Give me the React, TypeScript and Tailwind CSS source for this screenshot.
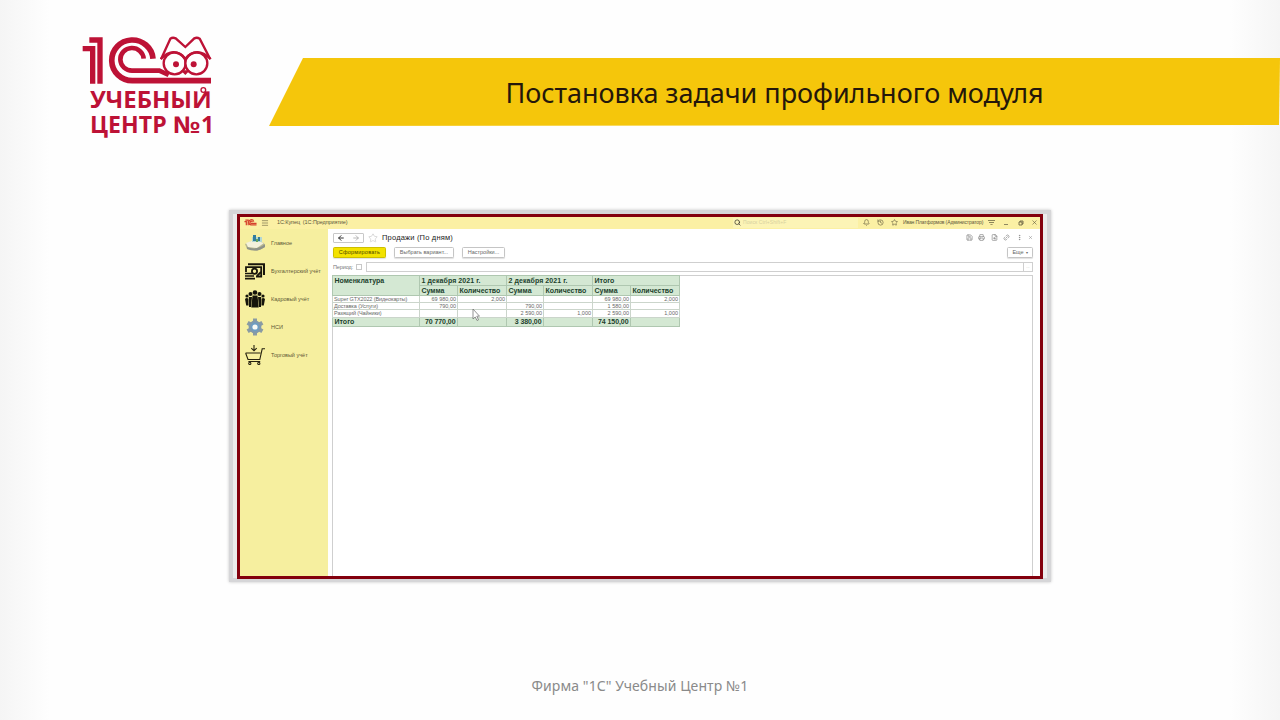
import React from "react";
import { clsx } from "clsx";
import {
  ArrowLeft,
  ArrowRight,
  Bell,
  FileSearch,
  History,
  Link2,
  Menu,
  MoreVertical,
  Printer,
  Save,
  Search,
  Star,
  X,
} from "lucide-react";

function Logo() {
  return (
    <svg className="block w-[160px] h-[120px] shrink-0" viewBox="0 0 480 360" aria-label="1С Учебный центр №1">
      <g fill="none" stroke="#bd1236">
        {/* digit one */}
        <path d="M58 45H90V176" strokeWidth="16" />
        <path d="M38 71H68V176" strokeWidth="16" />
        {/* letter С */}
        <path d="M249 101A62 61 0 1 0 187 167H423" strokeWidth="17" />
        <path d="M221 101A35 34 0 1 0 187 137H268L296 150" strokeWidth="14" />
        {/* owl with glasses */}
        <path d="M273 103L301 41Q308 36 317 40L346 66L373 40Q381 36 389 41L421 103" strokeWidth="7" />
        <circle cx="314" cy="115" r="33" fill="#fefefe" strokeWidth="7" />
        <circle cx="379" cy="115" r="33" fill="#fefefe" strokeWidth="7" />
        <path d="M272 102Q312 62 346 101Q380 62 422 102" strokeWidth="7" />
        <path d="M337 138L346 147L355 138Z" fill="#bd1236" strokeWidth="4" />
      </g>
      <circle cx="318" cy="118" r="9" fill="#bd1236" />
      <circle cx="371" cy="118" r="9" fill="#bd1236" />
      <g fill="#bd1236" fontFamily="'Open Sans', 'Noto Sans', sans-serif" fontWeight="700" fontSize="69">
        <text x="60" y="250" textLength="365" lengthAdjust="spacingAndGlyphs">УЧЕБНЫЙ</text>
        <text x="60" y="323" textLength="230" lengthAdjust="spacingAndGlyphs">ЦЕНТР</text>
        <text x="308" y="323" textLength="82" lengthAdjust="spacingAndGlyphs">№</text>
        <text x="393" y="323">1</text>
      </g>
      {/* ring over the last letter */}
      <path d="M374 180H426V199H374Z" fill="#fefefe" />
      <circle cx="400" cy="195" r="7" fill="#fefefe" stroke="#bd1236" strokeWidth="4" />
    </svg>
  );
}

function MiniLogo() {
  return (
    <svg className="w-[13px] h-[7px]" viewBox="0 0 28 14" fill="none" stroke="#d5402c" strokeWidth="2.6">
      <path d="M3 2H9V13M1 5H5V13" />
      <path d="M21 5A5.5 5.5 0 1 0 17 12H27" />
      <path d="M18 6A2.5 2.5 0 1 0 16 9H27" />
    </svg>
  );
}

function MainIcon() {
  return (
    <svg className="w-5 h-[18px]" viewBox="0 0 20 18">
      <path d="M0 10L9 6L19 9L20 13L12 17L2 15Z" fill="#b9b88f" />
      <path d="M1 9L9 6L19 9L12 14L3 13Z" fill="#f4f2dc" />
      <path d="M2 13Q11 17 20 10V13Q12 19 2 15Z" fill="#8f9489" />
      <path d="M7 3H17V8H7Z" fill="#b2d7d4" />
      <path d="M8 1H11V7H8ZM13 3H15V7H13Z" fill="#327e9d" />
      <path d="M11 5H13V8H11Z" fill="#68a65d" />
    </svg>
  );
}

function MoneyIcon() {
  return (
    <svg className="w-5 h-[17px]" viewBox="0 0 20 17" fill="none" stroke="#18160c">
      <path d="M3 1.2H19V12" strokeWidth="2" />
      <path d="M1 9V4.2H16.2V13.5H11" strokeWidth="1.8" />
      <circle cx="9.5" cy="8.3" r="2.6" strokeWidth="1.8" />
      <path d="M0 10.5H7M0 13H9M0 15.7H10" strokeWidth="1.7" />
      <path d="M12 13L16 9" strokeWidth="1.8" />
    </svg>
  );
}

function PeopleIcon() {
  return (
    <svg className="w-5 h-[18px]" viewBox="0 0 20 18" fill="#15140b">
      <circle cx="10" cy="2.5" r="2.3" />
      <circle cx="5.5" cy="4" r="2" />
      <circle cx="14.5" cy="4" r="2" />
      <circle cx="2" cy="6" r="1.6" />
      <circle cx="18" cy="6" r="1.6" />
      <path d="M7.5 5.5H12.5L13.7 17.5H6.3Z" />
      <path d="M3.8 7H7L6 17H4Z" />
      <path d="M13 7H16.2L16 17H14Z" />
      <path d="M0 9Q2 7 3.4 9L3.5 15.5H1.2Z" />
      <path d="M20 9Q18 7 16.6 9L16.5 15.5H18.8Z" />
    </svg>
  );
}

function GearIcon() {
  return (
    <svg className="w-[18px] h-[18px]" viewBox="0 0 18 18">
      <g stroke="#8a9ba3" strokeWidth="4">
        <path d="M9 .5V17.5M1.6 4.7L16.4 13.3M16.4 4.7L1.6 13.3" />
      </g>
      <circle cx="9" cy="9" r="6.4" fill="#8199ab" />
      <circle cx="9" cy="9" r="4.4" fill="#6d9dc2" />
      <circle cx="9" cy="9" r="2.6" fill="#f8faf6" />
    </svg>
  );
}

function CartIcon() {
  return (
    <svg className="w-5 h-5" viewBox="0 0 20 20" fill="none" stroke="#25210f" strokeWidth="1.1">
      <path d="M.6 8H15.4M.6 8L3 14.5H14.8L17.2 3.8H20M3.4 16.5H15.2" />
      <circle cx="4.8" cy="18.4" r="1.1" />
      <circle cx="13.8" cy="18.4" r="1.1" />
      <path d="M9 0V5.6M6.3 3.2L9 5.8L11.7 3.2" />
    </svg>
  );
}

const sections = [
  { label: "Главное", icon: <MainIcon /> },
  { label: "Бухгалтерский учёт", icon: <MoneyIcon /> },
  { label: "Кадровый учёт", icon: <PeopleIcon /> },
  { label: "НСИ", icon: <GearIcon /> },
  { label: "Торговый учёт", icon: <CartIcon /> },
];

const rows = [
  ["Super GTX2022 (Видеокарты)", "69 980,00", "2,000", "", "", "69 980,00", "2,000"],
  ["Доставка (Услуги)", "790,00", "", "790,00", "", "1 580,00", ""],
  ["Разящий (Чайники)", "", "", "2 590,00", "1,000", "2 590,00", "1,000"],
];

const totals = ["Итого", "70 770,00", "", "3 380,00", "", "74 150,00", ""];

function TitleBar() {
  return (
    <div className="flex items-center h-[12px] shrink-0 pb-px bg-[#fbf0a4] text-[#5d573a]">
      <div className="flex items-center w-[497px] pl-[4px] shrink-0">
        <MiniLogo />
        <Menu className="ml-[4px] w-[8px] h-[8px]" strokeWidth={1.7} />
        <span className="ml-[8px] text-[5.5px] tracking-[-0.09px] whitespace-pre">1С:Купец  (1С:Предприятие)</span>
      </div>
      <div className="flex items-center w-[125px] h-[10px] -ml-[4px] pl-[1px] bg-[#fcf4b6] shrink-0">
        <Search className="w-[7px] h-[7px] text-[#39352a]" strokeWidth={2.5} />
        <span className="ml-[2px] text-[5px] tracking-[0.08px] text-[#d7d1a0]">Поиск Ctrl+Shift+F</span>
      </div>
      <div className="flex items-center pl-[5px]">
        <Bell className="w-[7px] h-[7px]" />
        <History className="ml-[7px] w-[7px] h-[7px]" />
        <Star className="ml-[7px] w-[7px] h-[7px]" />
        <span className="ml-[5px] w-[80px] text-[5px] tracking-[-0.12px] whitespace-nowrap">Иван Платформов (Администратор)</span>
        <svg className="ml-[5px] w-[7px] h-[7px]" viewBox="0 0 7 7" fill="none" stroke="currentColor" strokeWidth=".7">
          <path d="M0 1.5H7M1 3.5H6M2.5 5L3.5 6L4.5 5" />
        </svg>
        <span className="ml-[9px] mt-[4px] w-[4px] h-px bg-[#8f8860]" />
        <svg className="ml-[10px] w-[6px] h-[6px]" viewBox="0 0 6 6" fill="none" stroke="currentColor" strokeWidth=".8">
          <path d="M1 2H4V5H1ZM2 2V1H5V4H4" />
        </svg>
        <X className="ml-[7px] w-[7px] h-[7px]" />
      </div>
    </div>
  );
}

function Sections() {
  return (
    <aside className="w-[88px] shrink-0 bg-[#f6ef9f]">
      {sections.map((s) => (
        <div key={s.label} className="flex items-center h-[28.1px] pl-[5px]">
          <div className="flex items-center justify-center w-5 shrink-0">{s.icon}</div>
          <span className="ml-[6px] text-[5.5px] text-[#5d5835] whitespace-nowrap">{s.label}</span>
        </div>
      ))}
    </aside>
  );
}

function ReportTable() {
  const head =
    "border border-[#afc7b0] bg-[#d4e8d3] p-0 px-[1.5px] text-left font-bold text-[#203f2c] text-[7px] leading-[7px]";
  return (
    <table className="w-[347px] table-fixed border-collapse whitespace-nowrap">
      <colgroup>
        <col className="w-[87px]" />
        <col className="w-[38px]" />
        <col className="w-[49px]" />
        <col className="w-[37px]" />
        <col className="w-[49px]" />
        <col className="w-[38px]" />
        <col className="w-[49px]" />
      </colgroup>
      <thead>
        <tr className="h-[10px]">
          <th rowSpan={2} className={clsx(head, "align-top pt-px tracking-[-0.04px]")}>Номенклатура</th>
          <th colSpan={2} className={clsx(head, "tracking-[0.07px]")}>1 декабря 2021 г.</th>
          <th colSpan={2} className={clsx(head, "tracking-[0.07px]")}>2 декабря 2021 г.</th>
          <th colSpan={2} className={head}>Итого</th>
        </tr>
        <tr className="h-[10px]">
          {[0, 1, 2].map((i) => (
            <React.Fragment key={i}>
              <th className={head}>Сумма</th>
              <th className={head}>Количество</th>
            </React.Fragment>
          ))}
        </tr>
      </thead>
      <tbody>
        {rows.map((row) => (
          <tr key={row[0]} className="h-[7.2px]">
            {row.map((cell, i) => (
              <td
                key={i}
                className={clsx(
                  "border border-[#cbd5cb] px-px text-[5.5px] leading-[6px] text-[#686868]",
                  i > 0 ? "text-right" : "tracking-[-0.11px]",
                )}
              >
                {cell}
              </td>
            ))}
          </tr>
        ))}
        <tr className="h-[9px]">
          {totals.map((cell, i) => (
            <td key={i} className={clsx(head, i > 0 && "!text-right tracking-[-0.06px]")}>{cell}</td>
          ))}
        </tr>
      </tbody>
    </table>
  );
}

function Report() {
  const button =
    "flex items-center justify-center h-[11px] rounded-[1.5px] border border-[#c5c5c5] bg-white text-[5.5px] text-[#666] shadow-[0_1px_1px_rgba(0,0,0,0.12)] whitespace-nowrap";
  return (
    <main className="flex-1 min-w-0 flex flex-col bg-white pl-[4px] pr-[7px]">
      <div className="flex items-center h-[17px] shrink-0 pl-px">
        <div className="flex items-center justify-around w-[31px] h-[10px] rounded-[1px] border border-[#c8c8c8]">
          <ArrowLeft className="w-[8px] h-[8px] text-[#333]" strokeWidth={3} />
          <ArrowRight className="w-[8px] h-[8px] text-[#999]" />
        </div>
        <Star className="ml-[4px] w-[10px] h-[10px] text-[#c5c5c5]" strokeWidth={1.5} />
        <h2 className="ml-[4px] text-[7.5px] tracking-[0.19px] text-[#222]">Продажи (По дням)</h2>
        <div className="ml-auto flex items-center gap-[5.5px] text-[#777]">
          <Save className="w-[7px] h-[7px]" />
          <Printer className="w-[7px] h-[7px]" />
          <FileSearch className="w-[7px] h-[7px]" />
          <Link2 className="w-[7px] h-[7px] -rotate-45" />
          <MoreVertical className="w-[7px] h-[7px]" />
          <X className="w-[5px] h-[5px]" />
        </div>
      </div>
      <div className="flex items-center h-[13px] shrink-0 pl-px">
        <div className={clsx(button, "w-[53px] !border-[#cdbf00] !bg-[#f3e200] !text-[#4d4700] tracking-[0.22px]")}>Сформировать</div>
        <div className={clsx(button, "ml-[8px] w-[60px]")}>Выбрать вариант...</div>
        <div className={clsx(button, "ml-[8px] w-[43px]")}>Настройки...</div>
        <div className={clsx(button, "ml-auto w-[26px]")}>
          Еще <span className="ml-[2px] text-[4px]">▾</span>
        </div>
      </div>
      <div className="flex items-center h-[16px] shrink-0 pl-px text-[5.5px] text-[#777]">
        <span className="w-[23px] tracking-[-0.1px]">Период:</span>
        <span className="w-[6px] h-[6px] border border-[#c8c8c8]" />
        <div className="flex justify-end ml-[4px] flex-1 h-[10px] border border-[#cfcfcf]">
          <span className="w-[9px] border-l border-[#cfcfcf] text-center text-[4px] leading-[7px] text-[#bbb]">...</span>
        </div>
      </div>
      <div className="relative flex-1 border border-b-0 border-[#cfcfcf]">
        <div className="-ml-px -mt-px">
          <ReportTable />
        </div>
        <svg className="absolute left-[139px] top-[32px] w-[8px] h-[13px]" viewBox="0 0 8 13">
          <path d="M1 1V11L3.2 9L5 12.5L6.5 11.8L4.8 8.2H7.5Z" fill="#fff" stroke="#666" strokeWidth=".7" />
        </svg>
      </div>
    </main>
  );
}

export default function App() {
  return (
    <div className="w-[1280px] h-[720px] overflow-hidden flex flex-col bg-[linear-gradient(90deg,#f5f5f5_0,#fefefe_50px,#fefefe_1230px,#f5f5f5_100%)]">
      <header className="flex items-start h-[184px] pl-[70px] pt-[25px] shrink-0">
        <Logo />
        <div className="flex items-center justify-center ml-[39px] mt-[33px] w-[1011px] h-[68px] pt-[2px] bg-[#f5c60b] [clip-path:polygon(34px_0,100%_0,1010px_67px,0_100%)]">
          <h1 className="font-['Noto_Sans'] text-[27px] tracking-[-0.04px] text-[#24170a] whitespace-nowrap">Постановка задачи профильного модуля</h1>
        </div>
      </header>

      <div className="ml-[229px] mt-[26px] w-[822px] h-[372px] pl-[4px] shrink-0 border-4 border-[#d6d6d8] bg-[#ececec] shadow-[0_0_3px_#c4c4c4]">
        <div className="flex flex-col w-[806px] h-[365px] border-[3px] border-[#83000d] bg-white font-['Liberation_Sans']">
          <TitleBar />
          <div className="flex flex-1 min-h-0">
            <Sections />
            <Report />
          </div>
        </div>
      </div>

      <footer className="mt-[93px] text-center font-['Noto_Sans'] text-[14px] tracking-[0.08px] leading-[22px] text-[#8a8a8a]">
        Фирма "1С" Учебный Центр №1
      </footer>
    </div>
  );
}
